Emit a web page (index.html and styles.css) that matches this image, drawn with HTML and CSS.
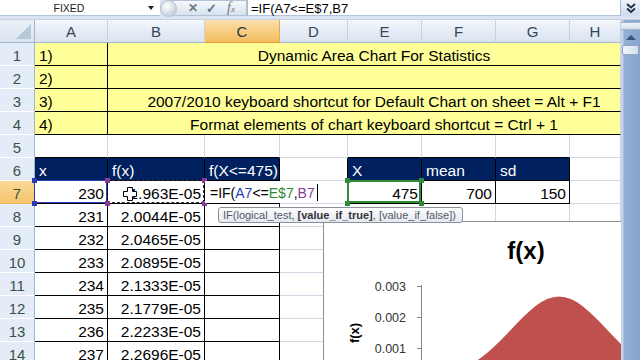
FILE: index.html
```html
<!DOCTYPE html>
<html lang="en">
<head>
    <meta charset="UTF-8">
    <title>Dynamic Area Chart For Statistics</title>
    <link rel="stylesheet" href="styles.css">
</head>
<body>
    <!-- formula bar -->
    <div class="fbar">
        <div class="namebox">
            <span class="namebox-text">FIXED</span>
            <i class="nb-arrow"></i>
        </div>
        <div class="fx-group">
            <span class="knob"></span>
            <span class="fx-cancel">✕</span>
            <span class="fx-enter">✓</span>
            <span class="fx-label">f<small>x</small></span>
        </div>
        <div class="formula">=IF(A7&lt;=E$7,B7</div>
        <div class="fbar-expand">
            <svg width="12" height="12" viewBox="0 0 12 12"><path d="M2 2l4 3.5 4-3.5M2 6.5l4 3.5 4-3.5" fill="none" stroke="#1d2f4f" stroke-width="1.8"/></svg>
        </div>
    </div>

    <div class="main">
        <div class="sheet">
            <!-- column headers -->
            <div class="corner"></div>
            <div class="ch">A</div>
            <div class="ch">B</div>
            <div class="ch sel">C</div>
            <div class="ch">D</div>
            <div class="ch">E</div>
            <div class="ch">F</div>
            <div class="ch">G</div>
            <div class="ch">H</div>

            <!-- rows 1-4 -->
            <div class="rh">1</div>
            <div class="c y kb kr">1)</div>
            <div class="c y kb merged">Dynamic Area Chart For Statistics</div>
            <div class="rh">2</div>
            <div class="c y kb kr">2)</div>
            <div class="c y kb merged"></div>
            <div class="rh">3</div>
            <div class="c y kb kr">3)</div>
            <div class="c y kb merged">2007/2010 keyboard shortcut for Default Chart on sheet = Alt + F1</div>
            <div class="rh">4</div>
            <div class="c y kb kr">4)</div>
            <div class="c y kb merged">Format elements of chart keyboard shortcut = Ctrl + 1</div>

            <!-- row 5 -->
            <div class="rh">5</div>
            <div class="c kb"></div>
            <div class="c kb"></div>
            <div class="c kb"></div>
            <div class="c"></div>
            <div class="c kb"></div>
            <div class="c kb"></div>
            <div class="c kb"></div>
            <div class="c"></div>

            <!-- row 6 -->
            <div class="rh">6</div>
            <div class="c k navy">x</div>
            <div class="c k navy">f(x)</div>
            <div class="c k navy">f(X&lt;=475)</div>
            <div class="c kr"></div>
            <div class="c k navy">X</div>
            <div class="c k navy">mean</div>
            <div class="c k navy">sd</div>
            <div class="c"></div>

            <!-- row 7 -->
            <div class="rh sel">7</div>
            <div class="c k num ref ref-a">230</div>
            <div class="c k num ref ref-b">1.963E-05
                <svg class="cursor" width="14" height="14" viewBox="0 0 14 14"><path d="M4.5 .5h5v4h4v5h-4v4h-5v-4h-4v-5h4z" fill="#fff" stroke="#000"/></svg>
            </div>
            <div class="c k edit-cell">
                <div class="editor">=IF(<span class="r-a">A7</span>&lt;=<span class="r-e">E$7</span>,<span class="r-b">B7</span></div>
            </div>
            <div class="c kr"></div>
            <div class="c k num ref ref-e">475</div>
            <div class="c k num">700</div>
            <div class="c k num">150</div>
            <div class="c"></div>

            <!-- rows 8-14 -->
            <div class="rh">8</div>
            <div class="c k num">231</div><div class="c k num">2.0044E-05</div><div class="c k"></div>
            <div class="c"></div><div class="c"></div><div class="c"></div><div class="c"></div><div class="c"></div>
            <div class="rh">9</div>
            <div class="c k num">232</div><div class="c k num">2.0465E-05</div><div class="c k"></div>
            <div class="c"></div><div class="c"></div><div class="c"></div><div class="c"></div><div class="c"></div>
            <div class="rh">10</div>
            <div class="c k num">233</div><div class="c k num">2.0895E-05</div><div class="c k"></div>
            <div class="c"></div><div class="c"></div><div class="c"></div><div class="c"></div><div class="c"></div>
            <div class="rh">11</div>
            <div class="c k num">234</div><div class="c k num">2.1333E-05</div><div class="c k"></div>
            <div class="c"></div><div class="c"></div><div class="c"></div><div class="c"></div><div class="c"></div>
            <div class="rh">12</div>
            <div class="c k num">235</div><div class="c k num">2.1779E-05</div><div class="c k"></div>
            <div class="c"></div><div class="c"></div><div class="c"></div><div class="c"></div><div class="c"></div>
            <div class="rh">13</div>
            <div class="c k num">236</div><div class="c k num">2.2233E-05</div><div class="c k"></div>
            <div class="c"></div><div class="c"></div><div class="c"></div><div class="c"></div><div class="c"></div>
            <div class="rh">14</div>
            <div class="c k num">237</div><div class="c k num">2.2696E-05</div><div class="c k"></div>
            <div class="c"></div><div class="c"></div><div class="c"></div><div class="c"></div><div class="c"></div>

            <!-- function tooltip -->
            <div class="tip">IF(logical_test, <b>[value_if_true]</b>, [value_if_false])</div>

            <!-- embedded chart -->
            <div class="chart">
                <svg width="298" height="140" viewBox="0 0 298 140">
                    <text class="ct-title" x="202" y="37" text-anchor="middle">f(x)</text>
                    <text class="ct-axis-title" transform="translate(35,111) rotate(-90)" text-anchor="middle">f(x)</text>
                    <text class="ct-label" x="82" y="68.5" text-anchor="end">0.003</text>
                    <text class="ct-label" x="82" y="99.5" text-anchor="end">0.002</text>
                    <text class="ct-label" x="82" y="130.5" text-anchor="end">0.001</text>
                    <path d="M134.3 157 L134.3 148.4 L140.2 145.8 L146.1 142.8 L152.05 139.2 L157.97 135 L163.9 130.2 L169.8 125 L175.75 119.3 L181.7 113.2 L187.6 107 L193.5 100.8 L199.45 94.8 L205.4 89.2 L211.3 84.2 L217.2 80.1 L223.15 77.1 L229.1 75.2 L235 74.55 L240.9 75.2 L246.85 77.1 L252.8 80.1 L258.7 84.2 L264.6 89.2 L270.55 94.8 L276.5 100.8 L282.4 107 L288.3 113.2 L294.25 119.3 L300.2 125 L300.2 157 Z" fill="#c0504d"/>
                    <path d="M97.5 63V140M93 64.5h4.5M93 95.5h4.5M93 126.5h4.5" stroke="#868686" fill="none"/>
                </svg>
            </div>
        </div>

        <div class="vscroll">
            <div class="split"></div>
            <div class="up"><i></i></div>
            <div class="thumb"></div>
            <div class="track"></div>
        </div>
    </div>
</body>
</html>
```

FILE: styles.css
```css
body {
    margin: 0;
    width: 640px;
    height: 360px;
    overflow: hidden;
    background-color: #fff;
    font-family: "Liberation Sans", Arial, sans-serif;
    color: #000;
}

/* formula bar */
.fbar {
    display: flex;
    height: 20px;
    padding-bottom: 3px;
    box-sizing: border-box;
    background-color: #dbe5f2;
    border-bottom: 1px solid #c2d1e4;
}

.namebox {
    display: flex;
    align-items: center;
    width: 160px;
    background-color: #fff;
    border-bottom: 1px solid #b3c3d8;
}

.namebox-text {
    width: 138px;
    text-align: center;
    font-size: 10.5px;
    color: #222;
}

.nb-arrow {
    margin-left: 10px;
    border-top: 4px solid #222;
    border-left: 3.5px solid transparent;
    border-right: 3.5px solid transparent;
}

.fx-group {
    position: relative;
    display: flex;
    align-items: center;
    width: 87px;
    background: linear-gradient(#f6f8fc, #d8e2ee);
    border: 1px solid #b1c2d7;
    border-radius: 9px 0 0 9px;
    box-sizing: border-box;
    color: #6b7888;
}

.knob {
    width: 15px;
    height: 15px;
    border-radius: 50%;
    background: radial-gradient(circle at 40% 35%, #fff, #c9d3df 70%);
    border: 1px solid #b6c3d3;
    margin-left: -1px;
}

.fx-cancel {
    margin-left: 11px;
    font-size: 12px;
    font-weight: bold;
}

.fx-enter {
    margin-left: 8px;
    font-size: 13px;
    font-weight: bold;
}

.fx-label {
    margin-left: 10px;
    font-family: "Liberation Serif", serif;
    font-style: italic;
    font-size: 14px;
    color: #6c7785;
}

.fx-label small {
    font-size: 9px;
}

.formula {
    flex: 1;
    padding-left: 3px;
    background-color: #fff;
    border-left: 1px solid #a8bbd2;
    border-bottom: 1px solid #b3c3d8;
    font-size: 13px;
    line-height: 17px;
}

.fbar-expand {
    display: flex;
    align-items: center;
    justify-content: center;
    width: 19px;
    background: linear-gradient(#eef3f9, #cfdcec);
    border-left: 1px solid #a8bbd2;
}

/* sheet */
.main {
    display: flex;
    height: 340px;
}

.sheet {
    position: relative;
    display: grid;
    grid-template-columns: 35px 73px 97px 75px 68px 74px 74px 74px 51px;
    grid-auto-rows: 23px;
    width: 621px;
    overflow: hidden;
}

.corner {
    position: relative;
    background: linear-gradient(#eaf0f8, #dbe4ef);
    border-right: 1px solid #9eb6ce;
    border-bottom: 1px solid #9eb6ce;
}

.corner::after {
    content: "";
    position: absolute;
    right: 3px;
    bottom: 3px;
    width: 15px;
    height: 15px;
    background-color: #b8c8db;
    clip-path: polygon(100% 0, 100% 100%, 0 100%);
}

.ch {
    background: linear-gradient(#f4f7fb, #e6edf6 45%, #dbe4ef);
    border-right: 1px solid #c5d2e1;
    border-bottom: 1px solid #9eb6ce;
    text-align: center;
    font-size: 15px;
    line-height: 24px;
    color: #364657;
}

.ch.sel {
    background: linear-gradient(#fbe1b0, #f7cf87 45%, #f2bd5d);
    border-right-color: #e8a94c;
    border-bottom-color: #f29436;
    color: #2a3440;
}

.rh {
    background-color: #e4ecf7;
    border-right: 1px solid #9eb6ce;
    border-bottom: 1px solid #fff;
    text-align: center;
    font-size: 15px;
    line-height: 26px;
    color: #3b5247;
}

.rh.sel {
    background: linear-gradient(#fbd898, #f5c56c);
    border-bottom-color: #f0b35a;
}

.c {
    box-sizing: border-box;
    padding: 0 4px;
    border-right: 1px solid #d0d7e5;
    border-bottom: 1px solid #d0d7e5;
    font-size: 15.5px;
    line-height: 26px;
    white-space: nowrap;
}

.y {
    background-color: #ffff99;
}

.k {
    border-right-color: #000;
    border-bottom-color: #000;
}

.kb {
    border-bottom-color: #000;
}

.kr {
    border-right-color: #000;
}

.navy {
    background-color: #002060;
    color: #fff;
}

.num {
    text-align: right;
    padding-right: 3px;
}

.merged {
    grid-column: span 7;
    text-align: center;
    padding-left: 24px;
}

/* formula reference highlights */
.ref {
    position: relative;
}

.ref::after {
    content: "";
    position: absolute;
    left: -1px;
    top: -1px;
    right: 0;
    bottom: 0;
    border: 1px solid var(--rc);
}

.ref::before {
    content: "";
    position: absolute;
    left: -3px;
    top: -3px;
    width: 5px;
    height: 5px;
    background-color: var(--rc);
    box-shadow: var(--w) 0 var(--rc), 0 23px var(--rc), var(--w) 23px var(--rc);
    z-index: 2;
}

.ref-a {
    --rc: #2a39b5;
    --w: 73px;
}

.ref-b {
    --rc: #8b3a9c;
    --w: 97px;
}

.ref-b::after {
    border: 1px dashed #2b2b2b;
}

.ref-e {
    --rc: #2f8a36;
    --w: 74px;
}

.ref-e::after {
    border-width: 2px;
}

.cursor {
    position: absolute;
    left: 15px;
    top: 6px;
}

.edit-cell {
    position: relative;
}

.editor {
    position: absolute;
    left: 0;
    top: 0;
    width: 113px;
    height: 22px;
    padding-left: 5px;
    box-sizing: border-box;
    background-color: #fff;
    font-size: 14px;
    line-height: 25px;
    z-index: 3;
}

.editor::after {
    content: "";
    position: absolute;
    right: 0;
    top: 3px;
    height: 17px;
    border-right: 1px solid #000;
}

.r-a {
    color: #2a39b5;
}

.r-e {
    color: #2f8a36;
}

.r-b {
    color: #8b3a9c;
}

.tip {
    position: absolute;
    left: 218px;
    top: 187px;
    width: 245px;
    height: 16px;
    box-sizing: border-box;
    padding-left: 4px;
    background: linear-gradient(#fdfdfe, #e4e8f0);
    border: 1px solid #8a8f99;
    border-radius: 3px;
    font-size: 11px;
    line-height: 14px;
    color: #555b66;
    white-space: nowrap;
    z-index: 5;
}

.tip b {
    color: #333;
}

.chart {
    position: absolute;
    left: 323px;
    top: 201px;
    width: 298px;
    height: 140px;
    background-color: #fff;
    border-left: 1px solid #8e8e8e;
    border-top: 1px solid #8e8e8e;
    z-index: 4;
}

.chart svg {
    display: block;
}

.ct-title {
    font-family: "Liberation Sans", Arial, sans-serif;
    font-weight: bold;
    font-size: 24px;
    fill: #000;
}

.ct-axis-title {
    font-family: "Liberation Sans", Arial, sans-serif;
    font-weight: bold;
    font-size: 13px;
    fill: #000;
}

.ct-label {
    font-family: "Liberation Sans", Arial, sans-serif;
    font-size: 12.5px;
    fill: #333;
}

/* vertical scroll bar */
.vscroll {
    display: flex;
    flex-direction: column;
    width: 19px;
    background: linear-gradient(to right, #c3d3e9, #c3d3e9 2px, #93afd5 3px, #87a4cc);
}

.split {
    height: 6px;
    margin-top: 2px;
    background: linear-gradient(#f1f5fa, #d4dfed);
    border-top: 1px solid #9fb4cf;
    border-bottom: 1px solid #9fb4cf;
}

.up {
    display: flex;
    align-items: center;
    justify-content: center;
    height: 15px;
}

.up i {
    border-bottom: 5px solid #34557e;
    border-left: 5px solid transparent;
    border-right: 5px solid transparent;
}

.thumb {
    height: 8px;
    margin: 0 1px;
    background: linear-gradient(to right, #f2f6fb, #d3deec);
    border: 1px solid #8ea7c7;
    border-radius: 2px;
}

.track {
    flex: 1;
}
```
